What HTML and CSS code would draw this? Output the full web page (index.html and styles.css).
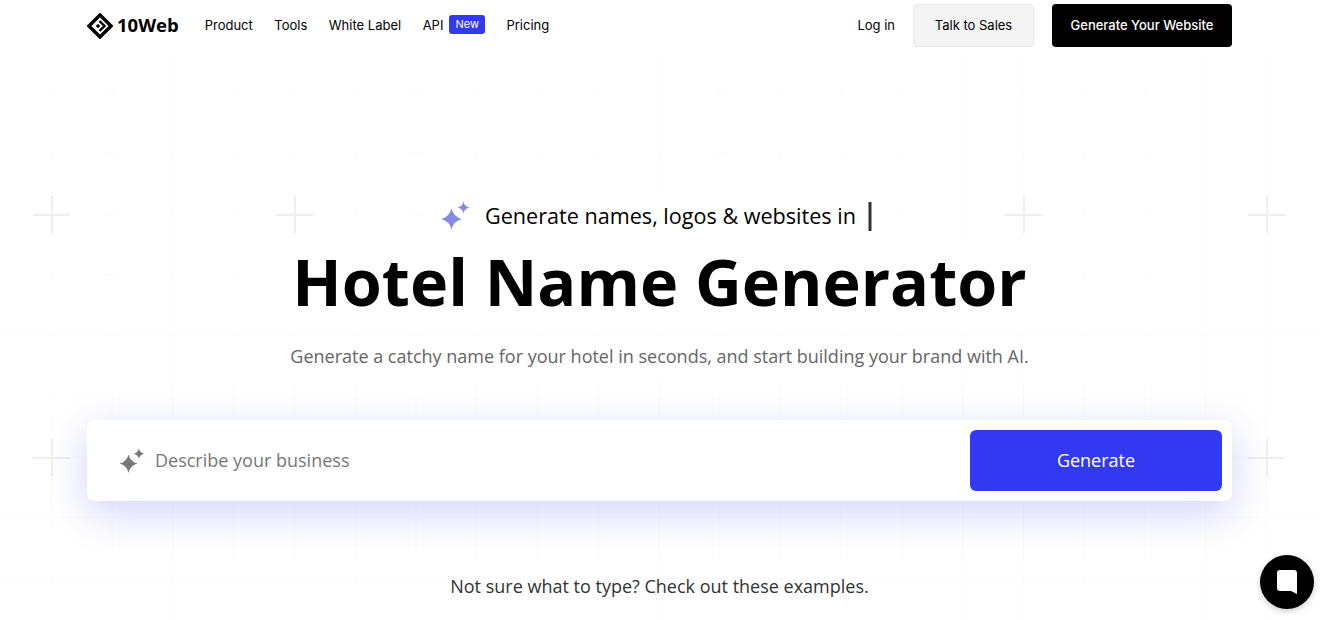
FILE: index.html
```html
<!DOCTYPE html>
<html lang="en">
<head>
  <meta charset="UTF-8" />
  <title>Hotel Name Generator</title>
  <link rel="stylesheet" href="styles.css">
</head>
<body>

  <header class="nav">
    <a class="logo" href="#">
      <svg class="logo-mark" viewBox="0 0 26 26" width="26" height="26">
        <path d="M13 2 24 13 13 24 2 13Z" fill="none" stroke="#000" stroke-width="3.400"/>
        <path d="M12.500 8 17.500 13 12.500 18" fill="none" stroke="#000" stroke-width="2.400"/>
        <path d="M11 10.800 13.200 13 11 15.200 8.800 13Z" fill="#000"/>
      </svg>
      <span>10Web</span>
    </a>
    <nav class="nav-links">
      <a href="#">Product</a>
      <a href="#">Tools</a>
      <a href="#">White Label</a>
      <a href="#" class="nav-api">API <span class="badge">New</span></a>
      <a href="#">Pricing</a>
    </nav>
    <div class="nav-actions">
      <a href="#" class="login">Log in</a>
      <a href="#" class="btn btn-light">Talk to Sales</a>
      <a href="#" class="btn btn-dark">Generate Your Website</a>
    </div>
  </header>

  <main class="hero">
    <div class="cross cross-a"></div>
    <div class="cross cross-b"></div>
    <div class="cross cross-c"></div>
    <div class="cross cross-d"></div>
    <div class="cross cross-e"></div>
    <div class="cross cross-f"></div>

    <div class="typing">
      <svg class="sparkle" viewBox="0 0 30 30" width="30" height="30">
        <path d="M11 7.500Q13 16 21.500 18 13 20 11 28.500 9 20 .5 18 9 16 11 7.500Z" fill="#8589e6"/>
        <path d="M23 .5Q24 5.500 29 6.500 24 7.500 23 12.500 22 7.500 17 6.500 22 5.500 23 .5Z" fill="#8589e6"/>
      </svg>
      <span>Generate names, logos &amp; websites in</span>
      <i class="caret"></i>
    </div>

    <h1>Hotel Name Generator</h1>
    <p class="lead">Generate a catchy name for your hotel in seconds, and start building your brand with AI.</p>

    <form class="prompt">
      <svg class="sparkle" viewBox="0 0 30 30" width="26" height="26">
        <path d="M11 7.500Q13 16 21.500 18 13 20 11 28.500 9 20 .5 18 9 16 11 7.500Z" fill="#777"/>
        <path d="M23 .5Q24 5.500 29 6.500 24 7.500 23 12.500 22 7.500 17 6.500 22 5.500 23 .5Z" fill="#777"/>
      </svg>
      <input type="text" placeholder="Describe your business" />
      <button type="button">Generate</button>
    </form>

    <p class="hint">Not sure what to type? Check out these examples.</p>
  </main>

  <a href="#" class="chat">
    <svg viewBox="0 0 20 24" width="20" height="24">
      <path d="M3 0H17Q20 0 20 3V24L14 21H3Q0 21 0 18V3Q0 0 3 0Z" fill="#fff"/>
    </svg>
  </a>

</body>
</html>
```

FILE: styles.css
```css
* {
  box-sizing: border-box;
}

html, body {
  margin: 0;
  padding: 0;
  height: 620px;
  overflow: hidden;
  background-color: #fff;
  font-family: 'Open Sans', sans-serif;
  color: #000;
}

a {
  color: inherit;
  text-decoration: none;
}

.nav {
  display: flex;
  align-items: center;
  width: 1319px;
  height: 51px;
  padding: 0 87px;
  font-family: 'Inter', sans-serif;
  font-size: 13px;
}

.logo {
  display: flex;
  align-items: center;
  gap: 4px;
  font-family: 'Open Sans', sans-serif;
  font-size: 18.500px;
  font-weight: 700;
  margin-right: 26px;
}

.logo span {
  padding-bottom: 2px;
}

.nav-links {
  display: flex;
  align-items: center;
  gap: 21.500px;
  padding-bottom: 2px;
}

.nav-api {
  display: flex;
  align-items: center;
  gap: 6px;
}

.badge {
  background-color: #3339f1;
  color: #fff;
  font-size: 11px;
  padding: 2px 6px;
  border-radius: 3px;
  line-height: 15px;
}

.nav-actions {
  display: flex;
  align-items: center;
  margin-left: auto;
}

.login {
  margin-right: 18px;
  padding-bottom: 2px;
}

.btn {
  display: flex;
  align-items: center;
  justify-content: center;
  height: 43px;
  padding-bottom: 2px;
  border-radius: 4px;
}

.btn-light {
  width: 121px;
  background-color: #f4f4f4;
  border: 1px solid #e8e8e8;
  margin-right: 18px;
}

.btn-dark {
  width: 180px;
  background-color: #000;
  color: #fff;
  font-weight: 500;
}

.hero {
  position: relative;
  display: flex;
  flex-direction: column;
  align-items: center;
  width: 1319px;
  height: 569px;
  padding: 148px 87px 0;
  background-image:
    linear-gradient(to right, #fbfbfb 1px, transparent 1px),
    linear-gradient(to bottom, #fbfbfb 1px, transparent 1px);
  background-size: 60.750px 60.750px;
  background-position: 51px 41px;
}

.cross {
  position: absolute;
  width: 37px;
  height: 37px;
  background-image:
    linear-gradient(#efefef, #efefef),
    linear-gradient(#efefef, #efefef);
  background-size: 2px 100%, 100% 2px;
  background-position: center, center;
  background-repeat: no-repeat;
}

.cross-a { left: 33px; top: 145px; }
.cross-b { left: 276px; top: 145px; }
.cross-c { left: 1005px; top: 145px; }
.cross-d { left: 1248px; top: 145px; }
.cross-e { left: 33px; top: 388px; }
.cross-f { left: 1248px; top: 388px; }

.typing {
  position: relative;
  display: flex;
  align-items: center;
  height: 34px;
  font-size: 21.600px;
  background-color: #fff;
  transform: translateX(-3.500px);
}

.typing span {
  padding-bottom: 2px;
}

.typing .sparkle {
  margin-right: 15px;
}

.caret {
  width: 3px;
  height: 29px;
  margin-left: 13px;
  background-color: #333;
}

h1 {
  position: relative;
  margin: 6px 0 0;
  font-size: 64.700px;
  line-height: 84px;
  font-weight: 700;
  background-color: #fff;
}

.lead {
  position: relative;
  margin: 20px 0 0;
  font-size: 18px;
  line-height: 26px;
  color: #666;
  background-color: #fff;
}

.prompt {
  position: relative;
  display: flex;
  align-items: center;
  width: 100%;
  height: 81px;
  margin-top: 51px;
  padding: 0 10px 0 32px;
  background-color: #fff;
  border-radius: 8px;
  box-shadow: 0 12px 40px rgba(51, 57, 241, 0.22);
}

.prompt input {
  flex: 1;
  margin-left: 10px;
  border: none;
  outline: none;
  padding: 0 0 2px;
  font-family: inherit;
  font-size: 18px;
}

.prompt input::placeholder {
  color: #777;
}

.prompt button {
  width: 252px;
  height: 61px;
  border: none;
  border-radius: 6px;
  padding: 0 0 2px;
  background-color: #3339f1;
  color: #fff;
  font-family: inherit;
  font-size: 18px;
  font-weight: 500;
}

.hint {
  position: relative;
  margin: 72px 0 0;
  font-size: 18px;
  line-height: 26px;
  color: #333;
}

.chat {
  position: fixed;
  right: 10px;
  bottom: 11px;
  display: flex;
  align-items: center;
  justify-content: center;
  width: 54px;
  height: 54px;
  border-radius: 50%;
  background-color: #000;
  box-shadow: 0 2px 6px rgba(0, 0, 0, 0.2);
}
```
